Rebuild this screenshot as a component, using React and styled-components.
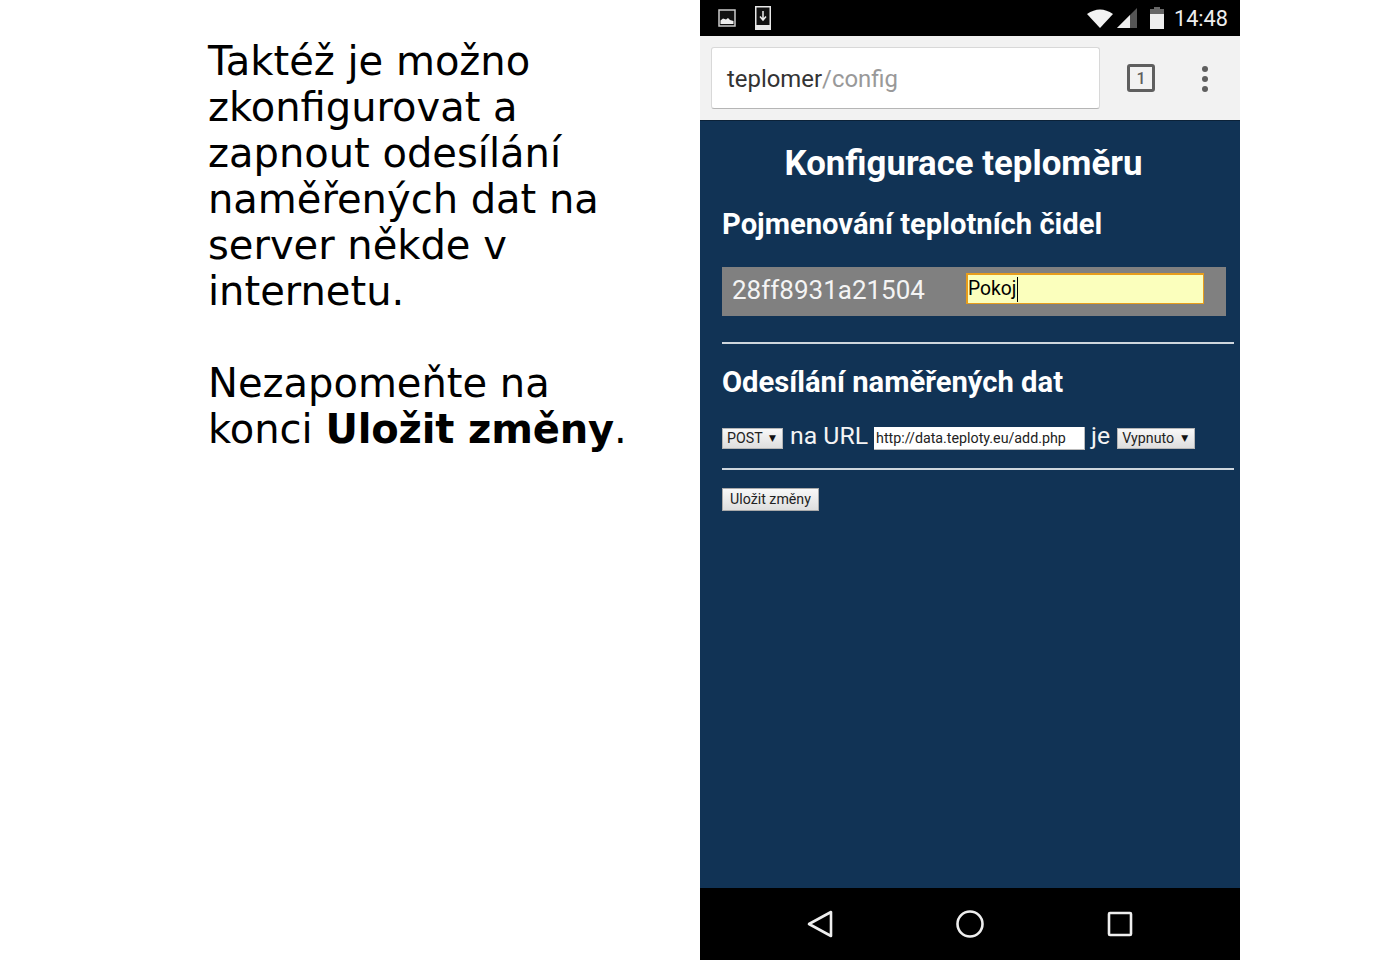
import React from "react";
import styled, { createGlobalStyle } from "styled-components";

const Global = createGlobalStyle`
  html, body { margin: 0; padding: 0; background: #fff; }
  body { width: 1400px; height: 960px; overflow: hidden; }
`;
const Page = styled.div`
  display: flex; width: 1400px; height: 960px;
`;
const Side = styled.div`
  width: 700px; box-sizing: border-box; padding: 38px 0 0 208px;
  font-family: "DejaVu Sans", sans-serif; font-size: 40px; line-height: 46px; color: #000;
`;
const Para = styled.p`
  margin: 0 0 46px; width: 440px;
`;
const Strong = styled.b`
  letter-spacing: -0.15px;
`;
const Phone = styled.div`
  width: 540px; height: 960px; display: flex; flex-direction: column;
  font-family: Roboto, sans-serif;
`;
const StatusBar = styled.div`
  height: 36px; background: #000; display: flex; align-items: center;
  padding: 0 12px 0 18px; box-sizing: border-box; flex: none;
`;
const StatusGroup = styled.div`
  display: flex; align-items: center; gap: ${p => p.$gap}px;
`;
const Spacer = styled.div`flex: 1;`;
const Clock = styled.span`
  color: #eee; font-size: 21.7px; line-height: 36px; margin-left: 3px; padding-top: 1px;
`;
const Toolbar = styled.div`
  height: 85px; background: #f2f2f2; flex: none; display: flex; align-items: flex-start;
  padding: 11px 0 0 11px; box-sizing: border-box; border-bottom: 1px solid #0c2238;
`;
const UrlBox = styled.div`
  width: 389px; height: 62px; box-sizing: border-box; background: #fff;
  border: 1px solid #d8d8d8; border-bottom-color: #b5b5b5; border-radius: 3px;
  padding: 2px 0 0 15px; display: flex; align-items: center; font-size: 23.9px;
  color: #333;
`;
const UrlPath = styled.span`color: #999;`;
const TabCount = styled.div`
  width: 22px; height: 22px; margin: 17px 0 0 27px; border: 3px solid #5f5f5f; border-radius: 3px;
  display: flex; align-items: center; justify-content: center; color: #5f5f5f;
  font-size: 16px; font-weight: 500;
`;
const Menu = styled.div`
  margin: 19px 0 0 47px; display: flex; flex-direction: column; gap: 4px;
`;
const Dot = styled.span`
  width: 6px; height: 6px; border-radius: 50%; background: #5f5f5f;
`;
const Content = styled.div`
  flex: 1; background: #113355; color: #fff; padding: 0 6px 0 22px; min-height: 0;
`;
const Title = styled.h1`
  margin: 22px 0 0; font-size: 34.8px; line-height: 40px; font-weight: 700;
  text-align: center; padding-right: 29px;
`;
const Heading = styled.h2`
  margin: ${p => p.$top}px 0 0; font-size: 29.2px; line-height: 34px; font-weight: 700;
`;
const SensorRow = styled.div`
  margin-top: 26px; width: 504px; height: 49px; background: #808080;
  display: flex; align-items: center; padding-left: 10px; box-sizing: border-box;
`;
const SensorId = styled.span`
  font-size: 26px; width: 234px; flex: none; color: #f4f4f4; position: relative; top: -2px;
`;
const NameInput = styled.div`
  width: 238px; height: 31px; box-sizing: border-box; background: #fbffbd;
  border: 1px solid #e79d1c; border-top-width: 2px; border-left-width: 2px; padding-left: 0; color: #000;
  font-size: 19.3px; line-height: 26px; display: flex; align-items: center;
  position: relative; top: -3px;
`;
const Caret = styled.i`
  width: 1px; height: 25px; background: #000; margin-left: 1px;
`;
const Rule = styled.div`
  height: 2px; background: #cfd6dd; margin-top: ${p => p.$top}px;
`;
const FormLine = styled.div`
  margin-top: 23px; height: 30px; display: flex; align-items: center; font-size: 24.8px;
  white-space: nowrap;
`;
const Word = styled.span`
  margin: 0 ${p => p.$right}px 0 ${p => p.$left}px; position: relative; top: -2px; color: #f4f4f4;
`;
const Select = styled.div`
  width: ${p => p.$w}px; height: 21px; box-sizing: border-box; background: linear-gradient(#f8f8f8, #dedede);
  border: 1px solid #b5b5b5; color: #222; font-size: 14.2px; display: flex; align-items: center;
  justify-content: space-between; padding: 0 6px 0 4px; margin-top: 2px;
`;
const Arrow = styled.span`
  font-family: "DejaVu Sans", sans-serif; font-size: 9px; color: #111;
`;
const UrlInput = styled.div`
  width: 211px; height: 23px; box-sizing: border-box; background: #fff; color: #222;
  border-right: 1px solid #bbb; border-bottom: 1px solid #bbb;
  font-size: 14.25px; padding-left: 2px; display: flex; align-items: center; margin-top: 2px;
`;
const SaveButton = styled.div`
  margin-top: 18px; width: 97px; height: 23px; box-sizing: border-box; padding-bottom: 2px;
  background: linear-gradient(#f8f8f8, #dedede); border: 1px solid #aaa; color: #222;
  font-size: 14.2px; display: flex; align-items: center; justify-content: center;
`;
const NavBar = styled.div`
  height: 72px; background: #000; flex: none; display: flex; align-items: center;
  justify-content: space-between; padding: 0 107px 0 107px; box-sizing: border-box;
`;
const NavIcon = styled.svg`
  width: ${p => p.$w}px; height: 30px; display: block; overflow: visible;
`;

export default function App() {
  return (
    <Page>
      <Global />
      <Side>
        <Para>Taktéž je možno zkonfigurovat a zapnout odesílání naměřených dat na server někde v internetu.</Para>
        <Para>Nezapomeňte na konci <Strong>Uložit změny</Strong>.</Para>
      </Side>
      <Phone>
        <StatusBar>
          <StatusGroup $gap={19}>
            <svg width="18" height="18" viewBox="0 0 18 18">
              <rect x="1" y="1" width="16" height="16" fill="#111" stroke="#ccc" strokeWidth="1.5" />
              <path d="M2.5 15 V11.5 L5 9.5 L8 10.5 L10 9 L12 11 L15.5 12 V15 Z" fill="#eee" />
            </svg>
            <svg width="16" height="24" viewBox="0 0 16 24">
              <rect x="0.75" y="0.75" width="14.5" height="22.5" fill="#111" stroke="#e8e8e8" strokeWidth="1.5" />
              <rect x="1" y="19" width="14" height="4" fill="#e8e8e8" />
              <path d="M8 5 V13 M5 10.5 L8 14 L11 10.5" stroke="#eee" strokeWidth="1.5" fill="none" />
            </svg>
          </StatusGroup>
          <Spacer />
          <StatusGroup $gap={4}>
            <svg width="26" height="20" viewBox="0 0 26 20">
              <path d="M0 6 Q13 -3 26 6 L13 20 Z" fill="#f2f2f2" />
            </svg>
            <svg width="20" height="20" viewBox="0 0 20 20" style={{ marginRight: 9 }}>
              <path d="M0 20 L20 0 V20 Z" fill="#555" />
              <path d="M0 20 L13 7 V20 Z" fill="#eee" />
            </svg>
            <svg width="14" height="22" viewBox="0 0 14 22" style={{ marginRight: 3 }}>
              <rect x="4" y="0" width="6" height="3" fill="#666" />
              <rect x="0" y="2" width="14" height="5" fill="#666" />
              <rect x="0" y="7" width="14" height="15" fill="#eee" />
            </svg>
            <Clock>14:48</Clock>
          </StatusGroup>
        </StatusBar>
        <Toolbar>
          <UrlBox>teplomer<UrlPath>/config</UrlPath></UrlBox>
          <TabCount>1</TabCount>
          <Menu><Dot /><Dot /><Dot /></Menu>
        </Toolbar>
        <Content>
          <Title>Konfigurace teploměru</Title>
          <Heading $top={24}>Pojmenování teplotních čidel</Heading>
          <SensorRow>
            <SensorId>28ff8931a21504</SensorId>
            <NameInput>Pokoj<Caret /></NameInput>
          </SensorRow>
          <Rule $top={26} />
          <Heading $top={21}>Odesílání naměřených dat</Heading>
          <FormLine>
            <Select $w={61}>POST <Arrow>▼</Arrow></Select>
            <Word $left={7} $right={6}>na URL</Word>
            <UrlInput>http://data.teploty.eu/add.php</UrlInput>
            <Word $left={6} $right={7}>je</Word>
            <Select $w={78}>Vypnuto <Arrow>▼</Arrow></Select>
          </FormLine>
          <Rule $top={16} />
          <SaveButton>Uložit změny</SaveButton>
        </Content>
        <NavBar>
          <NavIcon $w={26} viewBox="0 0 26 30">
            <path d="M2 15 L24 3 V27 Z" fill="none" stroke="#eee" strokeWidth="2.6" strokeLinejoin="round" />
          </NavIcon>
          <NavIcon $w={30} viewBox="0 0 26 30">
            <circle cx="13" cy="15" r="12.5" fill="none" stroke="#eee" strokeWidth="2.6" />
          </NavIcon>
          <NavIcon $w={26} viewBox="0 0 26 30">
            <rect x="2" y="4" width="22" height="22" rx="1" fill="none" stroke="#eee" strokeWidth="2.6" />
          </NavIcon>
        </NavBar>
      </Phone>
    </Page>
  );
}
